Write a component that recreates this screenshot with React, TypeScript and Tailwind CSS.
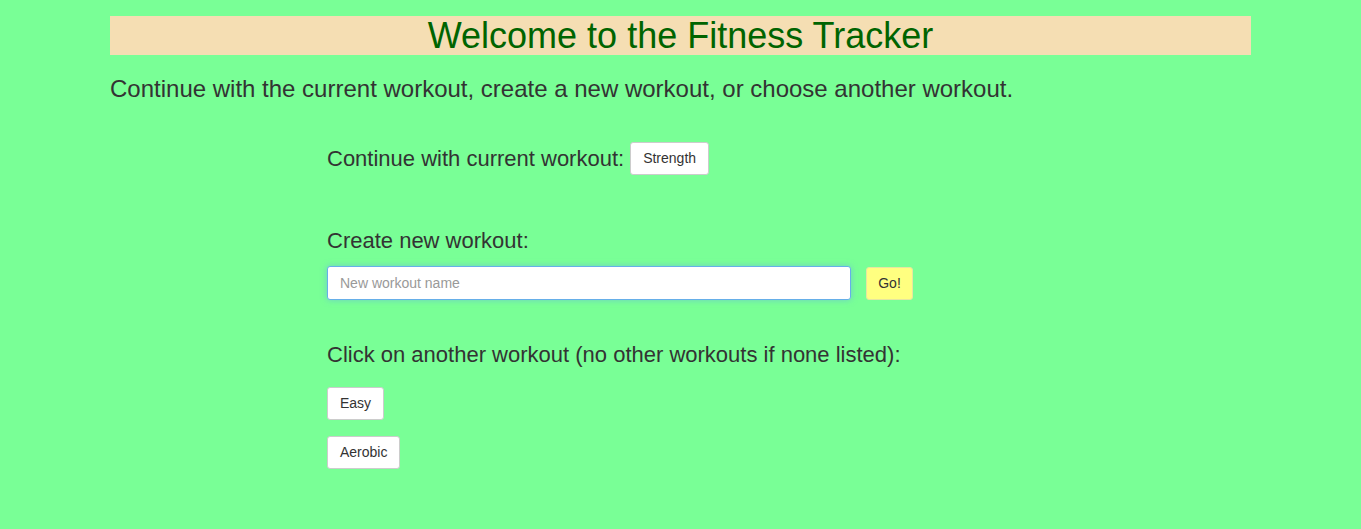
export default function App() {
  const others = ["Easy", "Aerobic"];

  return (
    <div className="min-h-[529px] bg-[#79ff96] font-['Liberation_Sans',Arial,sans-serif] text-[#333333]">
      <div className="mx-auto w-[1141px] pt-4">
        <h1 className="flex h-[39px] items-center justify-center bg-[#f5deb3] text-[36px] leading-none text-[#006400]">
          Welcome to the Fitness Tracker
        </h1>
        <p className="mt-[20px] text-[24px] leading-[28px]">
          Continue with the current workout, create a new workout, or choose another workout.
        </p>

        <div className="ml-[217px] mt-[39px]">
          <div className="flex items-center gap-[6px]">
            <span className="text-[22px]">Continue with current workout:</span>
            <button className="h-[33px] rounded-[3px] border border-[#ccc] bg-white px-3 text-[14px] text-[#333]">
              Strength
            </button>
          </div>

          <p className="mt-[53px] text-[22px] leading-[26px]">Create new workout:</p>
          <div className="mt-[12px] flex items-center gap-[15px]">
            <input
              className="h-[34px] w-[524px] rounded-[3px] border border-[#66afe9] bg-white px-3 text-[14px] shadow-[0_0_6px_rgba(102,175,233,0.6)] outline-none placeholder:text-[#999]"
              placeholder="New workout name"
            />
            <button className="h-[33px] w-[47px] rounded-[3px] border border-[#e6e6a0] bg-[#ffff80] text-[14px] text-[#333]">
              Go!
            </button>
          </div>

          <p className="mt-[42px] text-[22px] leading-[26px]">
            Click on another workout (no other workouts if none listed):
          </p>
          <div className="mt-[19px] flex flex-col items-start gap-4">
            {others.map((w) => (
              <button
                key={w}
                className="h-[33px] rounded-[3px] border border-[#ccc] bg-white px-3 text-[14px] text-[#333]"
              >
                {w}
              </button>
            ))}
          </div>
        </div>
      </div>
    </div>
  );
}
